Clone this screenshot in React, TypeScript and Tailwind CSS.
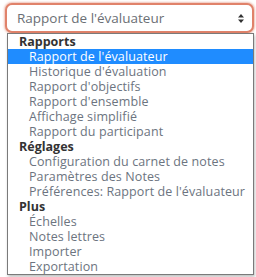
import React from 'react';

const groups = [
  {
    label: 'Rapports',
    items: [
      "Rapport de l'évaluateur",
      "Historique d'évaluation",
      "Rapport d'objectifs",
      "Rapport d'ensemble",
      'Affichage simplifié',
      'Rapport du participant',
    ],
  },
  {
    label: 'Réglages',
    items: ['Configuration du carnet de notes', 'Paramètres des Notes', "Préférences: Rapport de l'évaluateur"],
  },
  {
    label: 'Plus',
    items: ['Échelles', 'Notes lettres', 'Importer', 'Exportation'],
  },
];

const App = () => {
  return (
    <div className="w-[256px] h-[277px] bg-white relative overflow-hidden font-['Open_Sans',sans-serif] text-[12.5px]">
      <div className="pt-[3px] pl-[5px] pr-[2px]">
        <div className="h-[30px] rounded-[7px] border-2 border-[#e0826a] shadow-[0_0_2px_1px_rgba(224,130,106,0.5)] flex items-center justify-between pl-[10px] pr-[8px] bg-white">
          <span className="text-[#6b6f75] text-[13.5px]">Rapport de l'évaluateur</span>
          <svg width="6" height="9" viewBox="0 0 6 9" className="text-[#333]">
            <path d="M3 0 L6 3.5 H0 Z M3 9 L0 5.5 H6 Z" fill="currentColor" />
          </svg>
        </div>
      </div>
      <div className="absolute left-[7px] top-[33px] w-[247px] border border-[#7a7a7a] bg-white shadow-[1px_2px_3px_rgba(0,0,0,0.25)]">
        {groups.map((g) => (
          <div key={g.label}>
            <div className="h-[15px] leading-[15px] pl-[11px] font-bold text-[#333]">{g.label}</div>
            {g.items.map((it, i) => {
              const active = g.label === 'Rapports' && i === 0;
              return (
                <div
                  key={it}
                  className={
                    active
                      ? 'h-[15px] leading-[15px] pl-[21px] tracking-[0.1px] bg-[#1f8cff] text-white'
                      : 'h-[15px] leading-[15px] pl-[21px] tracking-[0.1px] text-[#6c7480]'
                  }
                >
                  {it}
                </div>
              );
            })}
          </div>
        ))}
      </div>
    </div>
  );
};

export default App;
